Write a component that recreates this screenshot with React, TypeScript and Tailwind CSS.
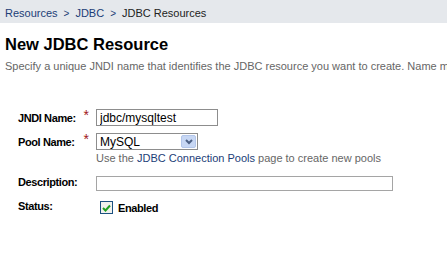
const App = () => {
  return (
    <div
      className="w-[447px] h-[266px] overflow-hidden bg-white text-[12px] text-[#333]"
      style={{ fontFamily: "'Liberation Sans', Arial, sans-serif" }}
    >
      <div className="h-[23px] bg-[#e5e8ec] flex items-center pl-[5px] pt-[4px] whitespace-nowrap text-[11px]">
        <a className="text-[#1c3d77]">Resources</a>
        <span className="text-[#1c3d77] mx-[6px] text-[10px]">&gt;</span>
        <a className="text-[#1c3d77]">JDBC</a>
        <span className="text-[#1c3d77] mx-[6px] text-[10px]">&gt;</span>
        <span className="text-[#222]">JDBC Resources</span>
      </div>
      <div className="pl-[5px] pt-[11px]">
        <h1 className="text-[16.5px] font-bold text-black leading-[20px]">New JDBC Resource</h1>
        <p className="mt-[5px] text-[11px] text-[#666] whitespace-nowrap overflow-hidden leading-[14px]">
          Specify a unique JNDI name that identifies the JDBC resource you want to create. Name mus
        </p>
      </div>
      <div className="pl-[18px] pt-[36px] grid grid-cols-[78px_1fr] gap-y-[7px] text-[11px]">
        <div className="flex items-start justify-between h-[17px] pt-[1px]">
          <span className="font-bold text-black leading-[16px] tracking-[-0.4px]">JNDI Name:</span>
          <span className="text-[#a01818] text-[14px] leading-[10px] mr-[7px]">*</span>
        </div>
        <div>
          <input
            className="w-[122px] h-[17px] border border-[#8d8d8d] px-[3px] text-[12px] text-black outline-none"
            defaultValue="jdbc/mysqltest"
          />
        </div>
        <div className="flex items-start justify-between h-[17px] pt-[1px]">
          <span className="font-bold text-black leading-[16px] tracking-[-0.4px]">Pool Name:</span>
          <span className="text-[#a01818] text-[14px] leading-[10px] mr-[7px]">*</span>
        </div>
        <div className="flex flex-col">
          <div className="w-[102px] h-[17px] border border-[#8d8d8d] flex items-center justify-between pl-[3px] pr-[1px]">
            <span className="text-[12px] text-black">MySQL</span>
            <span className="w-[15px] h-[13px] rounded-[2px] bg-[#c7d7f4] border border-[#b3c6ea] flex items-center justify-center">
              <svg width="8" height="6" viewBox="0 0 8 6">
                <path d="M1 1 L4 4 L7 1" stroke="#4d6185" strokeWidth="2" fill="none" />
              </svg>
            </span>
          </div>
          <div className="mt-[1px] text-[11px] text-[#666] whitespace-nowrap leading-[14px]">
            Use the <a className="text-[#1c3d77]">JDBC Connection Pools</a> page to create new pools
          </div>
        </div>
        <div className="flex items-center h-[15px] mt-[3px]">
          <span className="font-bold text-black tracking-[-0.4px]">Description:</span>
        </div>
        <div className="mt-[3px]">
          <input className="w-[297px] h-[15px] border border-[#a5a5a5] outline-none" />
        </div>
        <div className="flex items-center h-[14px] mt-[1px]">
          <span className="font-bold text-black tracking-[-0.4px]">Status:</span>
        </div>
        <div className="flex items-center mt-[1px] pl-[4px]">
          <span className="w-[13px] h-[13px] border border-[#1c5180] bg-[#f2f2ee] flex items-center justify-center">
            <svg width="9" height="8" viewBox="0 0 9 8">
              <path d="M1 4 L3.5 6.5 L8 1.5" stroke="#21a121" strokeWidth="2" fill="none" />
            </svg>
          </span>
          <span className="ml-[5px] font-bold text-black tracking-[-0.4px]">Enabled</span>
        </div>
      </div>
    </div>
  );
};

export default App;
